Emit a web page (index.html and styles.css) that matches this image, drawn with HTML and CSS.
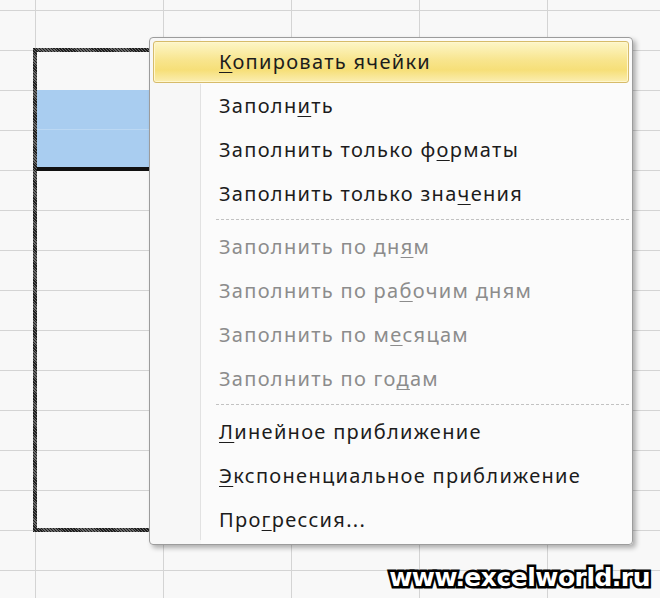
FILE: index.html
```html
<!DOCTYPE html>
<html>
<head>
	<meta charset="utf-8">
	<title>Автозаполнение</title>
	<link rel="stylesheet" href="styles.css">
</head>
<body>
	<div class="sheet">
		<div class="range">
			<div class="cell">1</div>
			<div class="cell picked">2</div>
			<div class="cell picked">3</div>
		</div>
	</div>

	<ul class="menu">
		<li class="item active"><u>К</u>опировать ячейки</li>
		<li class="item">Заполн<u>и</u>ть</li>
		<li class="item">Заполнить только ф<u>о</u>рматы</li>
		<li class="item">Заполнить только зна<u>ч</u>ения</li>
		<li class="sep"></li>
		<li class="item off">Заполнить по дн<u>я</u>м</li>
		<li class="item off">Заполнить по ра<u>б</u>очим дням</li>
		<li class="item off">Заполнить по м<u>е</u>сяцам</li>
		<li class="item off">Заполнить по го<u>д</u>ам</li>
		<li class="sep"></li>
		<li class="item"><u>Л</u>инейное приближение</li>
		<li class="item"><u>Э</u>кспоненциальное приближение</li>
		<li class="item">Про<u>г</u>рессия...</li>
	</ul>

	<div class="mark">www.excelworld.ru</div>
</body>
</html>
```

FILE: styles.css
```css
html {
	font: 20px/1 "Noto Sans", "Open Sans", sans-serif;
	color: #1c1c1c;
}

body {
	margin: 0;
	width: 660px;
	height: 598px;
	overflow: hidden;
	position: relative;
	background: #f8f8f8;
}

/* spreadsheet: lines every 128px across, every 40px down */
.sheet {
	display: grid;
	grid-template-columns: 35px repeat(4, 128px) 1fr;
	grid-template-rows: 10px repeat(13, 40px) 1fr;
	height: 100%;
	background-image:
		linear-gradient(to right, #d4d4d4 1px, transparent 1px),
		linear-gradient(to bottom, #d4d4d4 1px, transparent 1px);
	background-size: 128px 100%, 100% 40px;
	background-position: 35px 0, 0 10px;
}

.range {
	grid-column: 2;
	grid-row: 3 / 15;
	margin: -2px 0 -2px -2px;
	border: 4px solid #333;
	border-image: repeating-linear-gradient(45deg, #1e1e1e 0 1px, #6a6a6a 1px 2px) 4;
	border-right: none;
	display: flex;
	flex-direction: column;
}

.range .cell {
	height: 38px;
	box-sizing: border-box;
	padding: 8px 0 0 0;
	text-align: right;
	font-size: 16px;
}

.range .picked {
	height: 40px;
	background: #a9cdf0;
	border-bottom: 1px solid #bcd8f3;
}

.range .picked + .picked {
	height: 41px;
	border-bottom: 4px solid #111;
}

.menu {
	position: absolute;
	left: 149px;
	top: 37px;
	width: 476px;
	margin: 0;
	padding: 3px;
	list-style: none;
	display: flex;
	flex-direction: column;
	gap: 2px;
	background: linear-gradient(to right, #f7f7f7 51px, #fbfbfb 51px);
	border: 1px solid #9c9c9c;
	border-radius: 4px;
	box-shadow: 3px 3px 5px rgba(0, 0, 0, .3);
}

.menu::before {
	content: '';
	position: absolute;
	left: 50px;
	top: 46px;
	bottom: 4px;
	border-left: 1px solid #e2e2e2;
}

.item {
	position: relative;
	height: 42px;
	box-sizing: border-box;
	padding: 10px 0 0 65px;
	white-space: nowrap;
	letter-spacing: 1.3px;
	border: 1px solid transparent;
	border-radius: 3px;
}

.item u {
	text-underline-offset: 3px;
	text-decoration-thickness: 1px;
}

.item.active {
	background: linear-gradient(#fdf6c8, #f8e58e 45%, #f6df78 70%, #fbeeb2);
	border-color: #d6bb6a;
	box-shadow: inset 0 0 0 1px #fff7cf;
}

.item.off {
	color: #8c8c8c;
}

.sep {
	margin: 2px 0 0 63px;
	height: 4px;
	border-top: 1px dashed #c2c2c2;
}

.mark {
	position: absolute;
	right: 10px;
	bottom: 8px;
	font: 900 25px/1 "DejaVu Sans", sans-serif;
	color: #fff;
	-webkit-text-stroke: 5px #000;
	paint-order: stroke fill;
	letter-spacing: -0.5px;
}
```
